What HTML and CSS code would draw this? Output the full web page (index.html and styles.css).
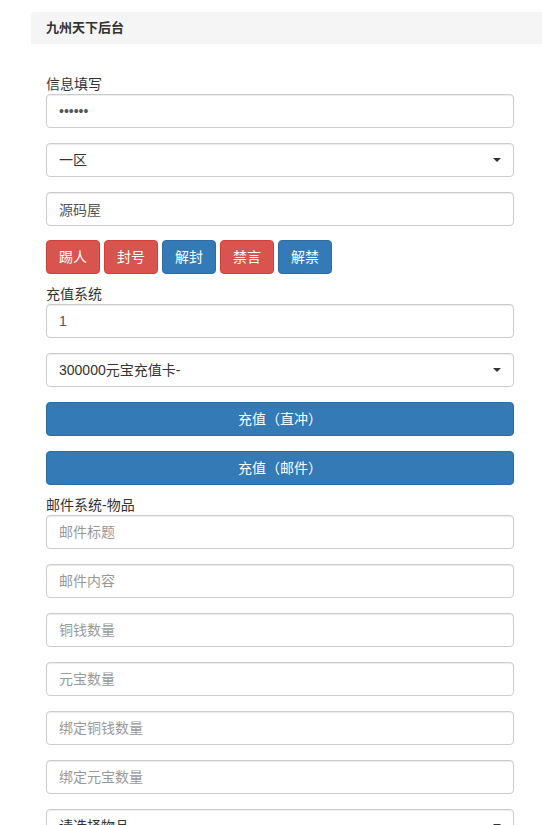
FILE: index.html
```html
<!DOCTYPE html>
<html lang="zh-CN">
<head>
<meta charset="utf-8">
<title>九州天下后台</title>
<link rel="stylesheet" href="styles.css">
</head>
<body>
<div class="panel">
  <div class="panel-heading">九州天下后台</div>
  <div class="panel-body">
    <label class="label">信息填写</label>
    <div class="form-group"><input class="form-control" type="password" value="123456"></div>
    <div class="form-group">
      <div class="form-control select"><span>一区</span><span class="caret"></span></div>
    </div>
    <div class="form-group form-group-tight"><input class="form-control" type="text" value="源码屋"></div>
    <div class="btn-row">
      <button class="btn btn-danger">踢人</button>
      <button class="btn btn-danger">封号</button>
      <button class="btn btn-primary">解封</button>
      <button class="btn btn-danger">禁言</button>
      <button class="btn btn-primary">解禁</button>
    </div>

    <label class="label">充值系统</label>
    <div class="form-group"><input class="form-control" type="text" value="1"></div>
    <div class="form-group">
      <div class="form-control select"><span>300000元宝充值卡-</span><span class="caret"></span></div>
    </div>
    <div class="form-group"><button class="btn btn-primary btn-block">充值（直冲）</button></div>
    <div class="form-group form-group-last"><button class="btn btn-primary btn-block">充值（邮件）</button></div>

    <label class="label">邮件系统-物品</label>
    <div class="form-group"><input class="form-control" type="text" placeholder="邮件标题"></div>
    <div class="form-group"><input class="form-control" type="text" placeholder="邮件内容"></div>
    <div class="form-group"><input class="form-control" type="text" placeholder="铜钱数量"></div>
    <div class="form-group"><input class="form-control" type="text" placeholder="元宝数量"></div>
    <div class="form-group"><input class="form-control" type="text" placeholder="绑定铜钱数量"></div>
    <div class="form-group"><input class="form-control" type="text" placeholder="绑定元宝数量"></div>
    <div class="form-group">
      <div class="form-control select"><span>请选择物品</span><span class="caret"></span></div>
    </div>
  </div>
</div>
</body>
</html>
```

FILE: styles.css
```css
html, body {
  margin: 0;
  padding: 0;
  overflow: hidden;
  background: #fff;
}
body {
  font-family: "Liberation Sans", "Noto Sans CJK SC", sans-serif;
  font-size: 14px;
  line-height: 20px;
  color: #333;
}
.panel {
  margin: 12px 0 0 31px;
  width: 560px;
}
.panel-heading {
  height: 32px;
  line-height: 32px;
  padding: 0 15px;
  background: #f5f5f5;
  border-top-left-radius: 4px;
  font-weight: bold;
  font-size: 13px;
  color: #333;
}
.panel-body {
  padding: 30px 0 0 15px;
  width: 468px;
}
.label {
  display: block;
  height: 20px;
  line-height: 20px;
  font-weight: normal;
}
.form-group {
  margin-bottom: 15px;
}
.form-group-tight {
  margin-bottom: 14px;
}
.form-group-last {
  margin-bottom: 10px;
}
.form-control {
  display: block;
  box-sizing: border-box;
  width: 100%;
  height: 34px;
  padding: 6px 12px;
  margin: 0;
  font-family: inherit;
  font-size: 14px;
  line-height: 20px;
  color: #555;
  background: #fff;
  border: 1px solid #ccc;
  border-radius: 4px;
  box-shadow: inset 0 1px 1px rgba(0, 0, 0, 0.075);
  outline: none;
}
.form-control::placeholder {
  color: #999;
}
.select {
  display: flex;
  align-items: center;
  justify-content: space-between;
  color: #333;
}
.caret {
  width: 0;
  height: 0;
  border-top: 4px solid #333;
  border-left: 4px solid transparent;
  border-right: 4px solid transparent;
}
.btn-row {
  display: flex;
  gap: 4px;
  margin-bottom: 10px;
}
.btn {
  box-sizing: border-box;
  height: 34px;
  padding: 6px 12px;
  font-family: inherit;
  font-size: 14px;
  line-height: 20px;
  color: #fff;
  border: 1px solid transparent;
  border-radius: 4px;
  cursor: pointer;
}
.btn-danger {
  background: #d9534f;
  border-color: #d43f3a;
}
.btn-primary {
  background: #337ab7;
  border-color: #2e6da4;
}
.btn-block {
  display: block;
  width: 100%;
}
```
